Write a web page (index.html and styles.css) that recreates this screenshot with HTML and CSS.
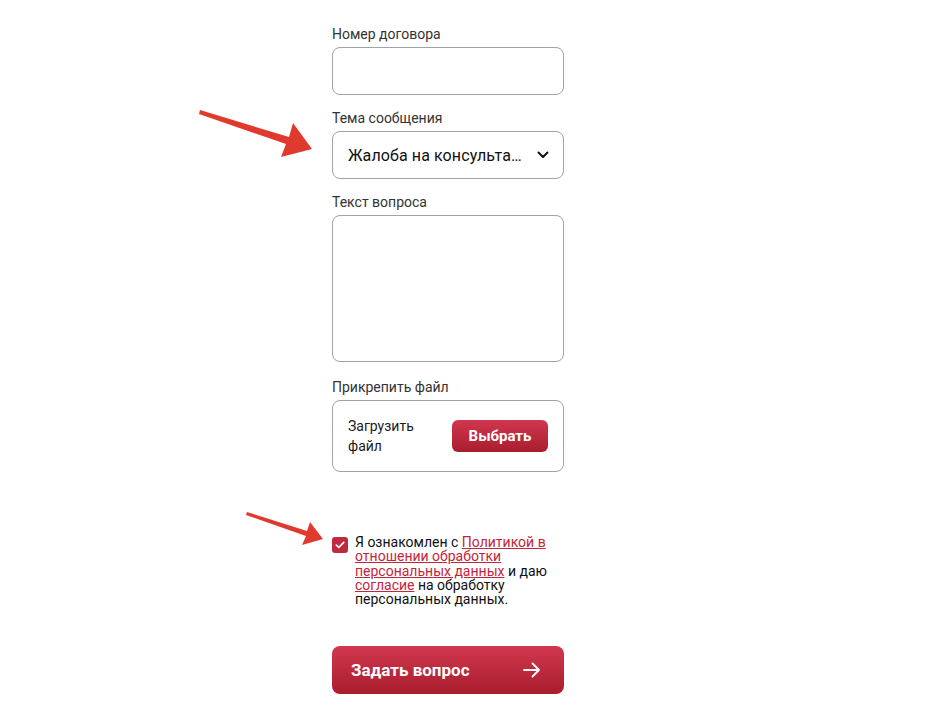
FILE: index.html
```html
<!DOCTYPE html>
<html>
<head>
	<meta charset="utf-8">
	<meta name="viewport" content="width=device-width, initial-scale=1">
	<title>Задать вопрос</title>
	<link rel="stylesheet" href="styles.css">
</head>
<body>
	<form class="form">
		<div class="field">
			<label class="label" for="num">Номер договора</label>
			<input class="input" type="text" id="num" autocomplete="off">
		</div>
		<div class="field">
			<label class="label">Тема сообщения</label>
			<div class="select">
				<span class="selectText">Жалоба на консульта…</span>
				<svg class="chevron" width="12" height="8" viewBox="0 0 12 8">
					<path d="M1.5 1.5 L6 6 L10.5 1.5" fill="none" stroke="#111" stroke-width="2" stroke-linecap="round" stroke-linejoin="round"/>
				</svg>
			</div>
			<!-- arrow pointing at the topic select -->
			<svg class="pointer pointerTop" width="120" height="52" viewBox="0 0 120 52">
				<path d="M2 6 L3 2 L92 29 L96 15 L115 41 L84 49 L89 36 Z" fill="#e03a2f"/>
			</svg>
		</div>
		<div class="field">
			<label class="label" for="msg">Текст вопроса</label>
			<textarea class="textarea" id="msg"></textarea>
		</div>
		<div class="field">
			<label class="label">Прикрепить файл</label>
			<div class="fileBox">
				<span class="fileText">Загрузить<br>файл</span>
				<button type="button" class="pickBtn">Выбрать</button>
			</div>
		</div>

		<div class="agree">
			<span class="check">
				<svg width="10" height="8" viewBox="0 0 10 8">
					<path d="M1.2 4 L3.8 6.4 L8.8 1.4" fill="none" stroke="#fff" stroke-width="1.6" stroke-linecap="round" stroke-linejoin="round"/>
				</svg>
			</span>
			<p class="agreeText">Я ознакомлен с <a href="#">Политикой в отношении обработки персональных данных</a> и даю <a href="#">согласие</a> на обработку персональных данных.</p>
			<!-- arrow pointing at the checkbox -->
			<svg class="pointer pointerBottom" width="80" height="36" viewBox="0 0 80 36">
				<path d="M1 4 L2 1 L62 20 L65 11 L78 28 L57 34 L61 25 Z" fill="#e03a2f"/>
			</svg>
		</div>

		<button type="submit" class="sendBtn">
			<span>Задать вопрос</span>
			<svg width="18" height="16" viewBox="0 0 18 16">
				<path d="M1 8 H16 M9.5 1.5 L16 8 L9.5 14.5" fill="none" stroke="#fff" stroke-width="1.8" stroke-linecap="round" stroke-linejoin="round"/>
			</svg>
		</button>
	</form>
</body>
</html>
```

FILE: styles.css
```css
body {
	margin: 0;
	padding: 0;
	background-color: #fff;
	font-family: Roboto, "Liberation Sans", sans-serif;
	color: #1b1b1b;
}

.form {
	width: 232px;
	margin: 0 auto;
	padding-top: 26px;
	position: relative;
	left: -17px;
}

.field {
	position: relative;
	margin-bottom: 15px;
}

.label {
	display: block;
	font-size: 14px;
	line-height: 16px;
	color: #333;
	margin-bottom: 5px;
}

.input,
.select,
.textarea,
.fileBox {
	display: block;
	box-sizing: border-box;
	width: 100%;
	border: 1px solid #9ea1b0;
	border-radius: 8px;
	background: #fff;
}

.input {
	height: 48px;
	font-size: 16px;
	padding: 0 15px;
}

.select {
	height: 48px;
	display: flex;
	align-items: center;
	justify-content: space-between;
	padding: 0 14px 0 15px;
}

.selectText {
	font-size: 16px;
	color: #111;
	letter-spacing: 0.1px;
}

.textarea {
	height: 147px;
	resize: none;
	margin-bottom: 17px;
}

.fileBox {
	height: 72px;
	display: flex;
	align-items: center;
	justify-content: space-between;
	padding: 0 15px 0 15px;
}

.fileText {
	font-size: 14px;
	line-height: 20px;
	color: #1b1b1b;
}

.pickBtn,
.sendBtn {
	border: none;
	color: #fff;
	font-family: Roboto, "Liberation Sans", sans-serif;
	font-weight: bold;
	background: linear-gradient(#d1374e, #a81d2e);
	cursor: pointer;
}

.pickBtn {
	width: 96px;
	height: 32px;
	border-radius: 6px;
	font-size: 15px;
}

.agree {
	position: relative;
	display: flex;
	align-items: flex-start;
	margin-top: 63px;
}

.check {
	flex: none;
	width: 16px;
	height: 16px;
	margin-top: 2px;
	border-radius: 3px;
	background: #c02a40;
	display: flex;
	align-items: center;
	justify-content: center;
}

.agreeText {
	margin: 0 0 0 7px;
	width: 195px;
	font-size: 14px;
	line-height: 14.3px;
	color: #111;
}

.agreeText a {
	color: #c4253b;
	text-decoration: underline;
	text-underline-offset: 1px;
}

.sendBtn {
	margin-top: 40px;
	width: 100%;
	height: 48px;
	border-radius: 8px;
	display: flex;
	align-items: center;
	justify-content: space-between;
	padding: 0 23px 0 19px;
	font-size: 17px;
}

.pointer {
	position: absolute;
}

.pointerTop {
	left: -135px;
	top: -2px;
}

.pointerBottom {
	left: -87px;
	top: -24px;
}
```
